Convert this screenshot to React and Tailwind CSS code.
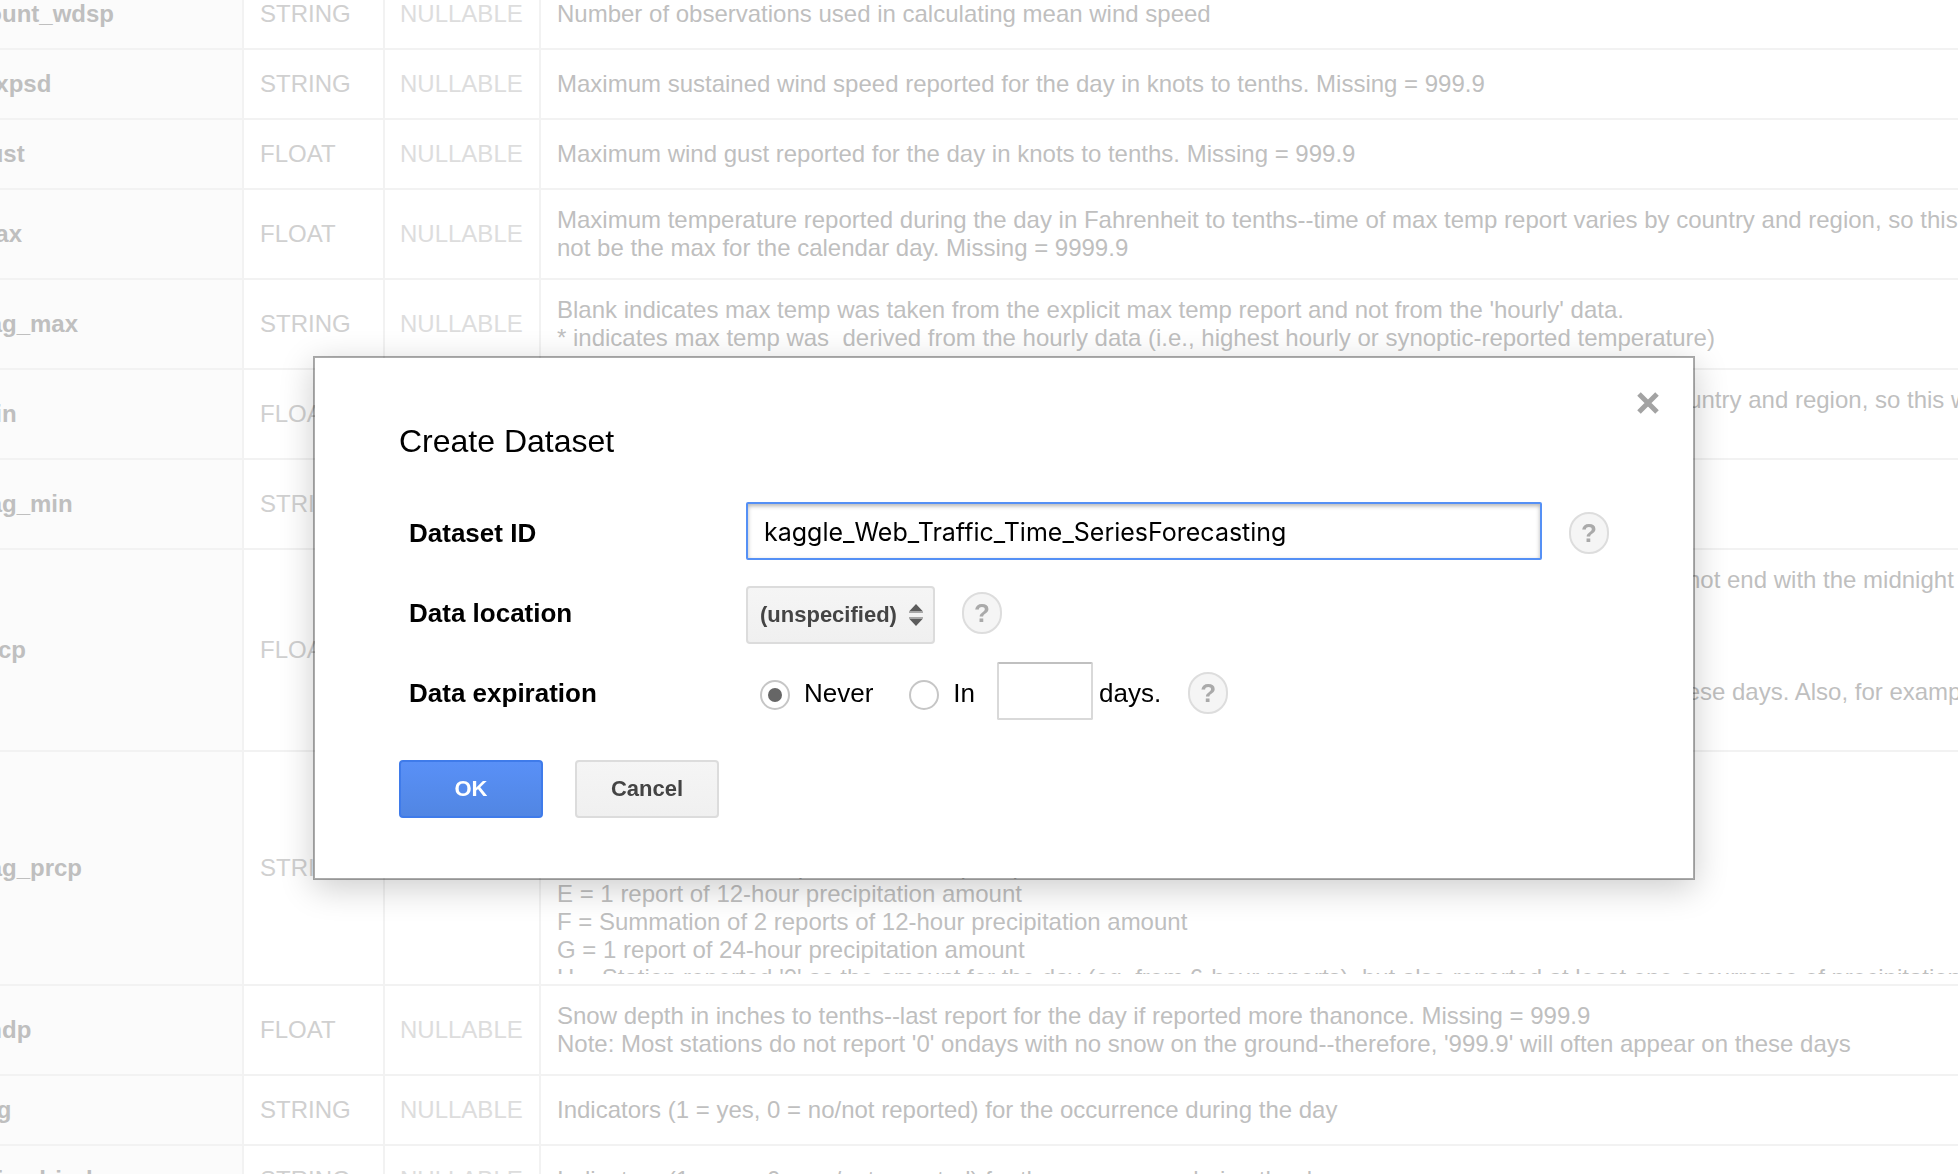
import React from 'react';

const rows = [
  { name: 'count_wdsp', type: 'STRING', lines: ['Number of observations used in calculating mean wind speed'] },
  { name: 'mxpsd', type: 'STRING', lines: ['Maximum sustained wind speed reported for the day in knots to tenths. Missing = 999.9'] },
  { name: 'gust', type: 'FLOAT', lines: ['Maximum wind gust reported for the day in knots to tenths. Missing = 999.9'] },
  {
    name: 'max',
    type: 'FLOAT',
    lines: [
      'Maximum temperature reported during the day in Fahrenheit to tenths--time of max temp report varies by country and region, so this will sometimes',
      'not be the max for the calendar day. Missing = 9999.9',
    ],
  },
  {
    name: 'flag_max',
    type: 'STRING',
    lines: [
      "Blank indicates max temp was taken from the explicit max temp report and not from the 'hourly' data.",
      '* indicates max temp was  derived from the hourly data (i.e., highest hourly or synoptic-reported temperature)',
    ],
  },
  {
    name: 'min',
    type: 'FLOAT',
    lines: [
      'Minimum temperature reported during the day in Fahrenheit to tenths--time of min temp report varies by country and region, so this will sometimes',
      'not be the min for the calendar day. Missing = 9999.9',
    ],
  },
  {
    name: 'flag_min',
    type: 'STRING',
    lines: [
      "Blank indicates min temp was taken from the explicit min temp report and not from the 'hourly' data.",
      '* indicates min temp was derived from the hourly data',
    ],
  },
  {
    name: 'prcp',
    type: 'FLOAT',
    lines: [
      'Total precipitation (rain and/or melted snow) reported during the day in inches and hundredths; will usually not end with the midnight',
      'observation--i.e., may include latter part of previous day.',
      '.00 indicates no measurable precipitation (includes a trace).',
      'Missing = 99.99',
      "Note: Many stations do not report '0' on days with no precipitation--therefore, '99.99' will often appear on these days. Also, for example,",
      'a station may only report a 6-hour amount for the period.',
    ],
  },
  {
    name: 'flag_prcp',
    type: 'STRING',
    lines: [
      'A = 1 report of 6-hour precipitation amount',
      'B = Summation of 2 reports of 6-hour precipitation amount',
      'C = Summation of 3 reports of 6-hour precipitation amount',
      'D = Summation of 4 reports of 6-hour precipitation amount',
      'E = 1 report of 12-hour precipitation amount',
      'F = Summation of 2 reports of 12-hour precipitation amount',
      'G = 1 report of 24-hour precipitation amount',
      "H = Station reported '0' as the amount for the day (eg, from 6-hour reports), but also reported at least one occurrence of precipitation",
    ],
  },
  {
    name: 'sndp',
    type: 'FLOAT',
    lines: [
      'Snow depth in inches to tenths--last report for the day if reported more thanonce. Missing = 999.9',
      "Note: Most stations do not report '0' ondays with no snow on the ground--therefore, '999.9' will often appear on these days",
    ],
  },
  { name: 'fog', type: 'STRING', lines: ['Indicators (1 = yes, 0 = no/not reported) for the occurrence during the day'] },
  { name: 'rain_drizzle', type: 'STRING', lines: ['Indicators (1 = yes, 0 = no/not reported) for the occurrence during the day'] },
];

function SchemaTable() {
  return (
    <div className="h-screen overflow-hidden bg-white" aria-hidden="true">
      <table className="-mt-5 -ml-[42px] w-[calc(100%+242px)] table-fixed border-separate border-spacing-0 text-2xl leading-7">
        <colgroup>
          <col className="w-[286px]" />
          <col className="w-[141px]" />
          <col className="w-[156px]" />
          <col />
        </colgroup>
        <tbody>
          {rows.map((row) => (
            <tr key={row.name} className="h-[70px]">
              <th scope="row" className="border-r-2 border-b-2 border-[#f2f2f2] bg-[#fbfbfb] px-4 text-left font-bold text-[#bfbfbf]">
                {row.name}
              </th>
              <td className="border-r-2 border-b-2 border-[#f2f2f2] px-4 text-[#d0d0d0]">{row.type}</td>
              <td className="border-r-2 border-b-2 border-[#f2f2f2] px-[15px] text-[#dddddd]">NULLABLE</td>
              <td className="border-b-2 border-[#f2f2f2] px-4 py-[10px] text-[#bfbfbf]">
                <div className="max-h-[212px] overflow-hidden py-[6px] whitespace-pre">
                  {row.lines.map((line) => (
                    <div key={line}>{line}</div>
                  ))}
                </div>
              </td>
            </tr>
          ))}
        </tbody>
      </table>
    </div>
  );
}

function Help({ label }) {
  return (
    <button
      type="button"
      aria-label={label}
      className="ml-[27px] flex h-[42px] w-10 shrink-0 items-center justify-center rounded-[20px] border-2 border-[#dddddd] bg-[#f5f5f5] text-[26px] leading-none font-bold text-[#aaaaaa]"
    >
      ?
    </button>
  );
}

const radioClass =
  'flex size-[30px] appearance-none items-center justify-center rounded-full border-2 border-[#c6c6c6] bg-white before:size-[14px] before:rounded-full checked:before:bg-[#666666] mt-1';

const rowClass = 'grid h-20 grid-cols-[337px_1fr] items-center pl-[10px]';

function CreateDatasetDialog() {
  return (
    <div className="fixed inset-0 flex items-start justify-center pt-[356px] pl-[50px]">
      <div
        role="dialog"
        aria-labelledby="dialog-title"
        className="relative w-full max-w-[1382px] border-2 border-black/33 bg-white bg-clip-padding px-[84px] py-[60px] text-[26px] text-black shadow-[0_8px_32px_rgba(0,0,0,0.2)]"
      >
        <button type="button" aria-label="Close" className="absolute top-[34px] right-[34px] size-[22px]">
          <svg viewBox="0 0 22 22" className="size-[22px]" fill="none" stroke="#a3a3a3" strokeWidth="5">
            <path d="M2 2 20 20M20 2 2 20" />
          </svg>
        </button>

        <h1 id="dialog-title" className="text-[32px] leading-[46px]">
          Create Dataset
        </h1>

        <form className="mt-[29px]" onSubmit={(e) => e.preventDefault()}>
          <div className={rowClass}>
            <label htmlFor="dataset-id" className="font-bold">
              Dataset ID
            </label>
            <div className="flex items-center">
              <input
                id="dataset-id"
                type="text"
                defaultValue="kaggle_Web_Traffic_Time_SeriesForecasting"
                className="mb-1 h-[58px] min-w-0 flex-1 rounded-[2px] border-2 border-[#5590f5] bg-white px-4 pt-[2px] font-['Inter',sans-serif] text-[25px] shadow-[inset_0_2px_4px_rgba(0,0,0,0.3)] outline-none"
              />
              <Help label="About dataset ID" />
            </div>
          </div>

          <div className={rowClass}>
            <label htmlFor="data-location" className="font-bold">
              Data location
            </label>
            <div className="flex items-center">
              <div className="relative mt-1">
                <select
                  id="data-location"
                  className="h-[58px] w-[189px] appearance-none rounded-[4px] border-2 border-[#dcdcdc] bg-linear-to-b from-[#f5f5f5] to-[#f0f0f0] pb-[2px] pl-3 text-[22px] font-bold text-[#444444]"
                >
                  <option>(unspecified)</option>
                </select>
                <svg viewBox="0 0 14 22" className="pointer-events-none absolute top-[18px] right-3 h-[22px] w-[14px]">
                  <path d="M7 0 14 7.5H0zM0 14.5H14L7 22z" fill="#5c5c5c" />
                  <path d="M0 7.5H14V9H0zM0 13H14V14.5H0z" fill="#a8a8a8" />
                </svg>
              </div>
              <Help label="About data location" />
            </div>
          </div>

          <div className={rowClass}>
            <span id="expiration-label" className="font-bold">
              Data expiration
            </span>
            <div role="radiogroup" aria-labelledby="expiration-label" className="flex items-center pl-[14px]">
              <input id="never" type="radio" name="expiration" defaultChecked className={radioClass} />
              <label htmlFor="never" className="ml-[14px]">
                Never
              </label>
              <input id="in-days" type="radio" name="expiration" className={radioClass + ' ml-9'} />
              <label htmlFor="in-days" className="ml-[14px]">
                In
              </label>
              <input
                id="days"
                type="text"
                className="mb-1 ml-[22px] h-[58px] w-24 rounded-[2px] border-2 border-[#d9d9d9] border-t-[#c0c0c0] bg-white px-3 outline-none"
              />
              <label htmlFor="days" className="ml-[6px]">
                days.
              </label>
              <Help label="About data expiration" />
            </div>
          </div>

          <div className="mt-[27px] flex gap-8 text-[22px] font-bold">
            <button
              type="submit"
              className="h-[58px] w-36 rounded-[4px] border-2 border-[#3f7bea] bg-linear-to-b from-[#5990f7] to-[#5186e3] pb-[2px] text-white"
            >
              OK
            </button>
            <button
              type="button"
              className="h-[58px] w-36 rounded-[4px] border-2 border-[#dcdcdc] bg-linear-to-b from-[#f5f5f5] to-[#f0f0f0] pb-[2px] text-[#444444]"
            >
              Cancel
            </button>
          </div>
        </form>
      </div>
    </div>
  );
}

export default function App() {
  return (
    <main className="font-['Liberation_Sans',Arial,sans-serif]">
      <SchemaTable />
      <CreateDatasetDialog />
    </main>
  );
}
